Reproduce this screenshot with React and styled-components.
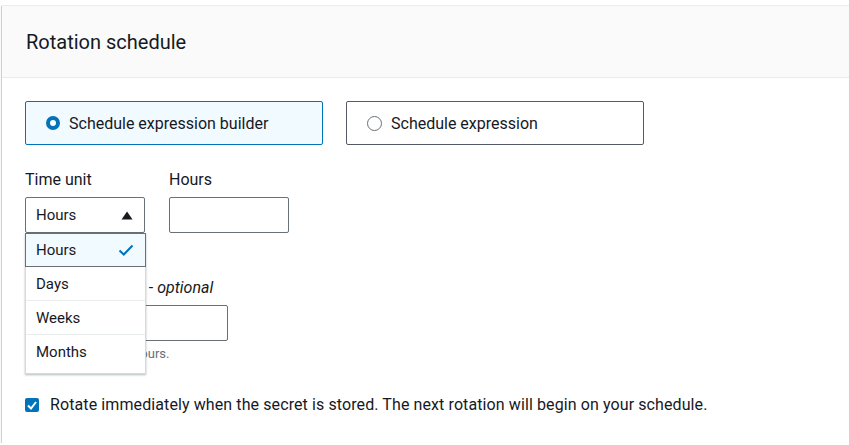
import React from "react";
import styled, { createGlobalStyle } from "styled-components";

const GlobalStyle = createGlobalStyle`
  html, body {
    margin: 0;
    padding: 0;
    background: #ffffff;
    overflow: hidden;
  }
  body {
    font-family: Roboto, "Liberation Sans", sans-serif;
    color: #16191f;
    padding: 5px 0 0 2px;
  }
`;

const Card = styled.section`
  width: 880px;
  background: #ffffff;
  box-shadow: 0 1px 1px 0 rgba(0, 28, 36, 0.3), 1px 1px 1px 0 rgba(0, 28, 36, 0.15),
    -1px 1px 1px 0 rgba(0, 28, 36, 0.15);
  border-top: 1px solid #eaeded;
`;

const Header = styled.header`
  height: 71px;
  display: flex;
  align-items: center;
  padding: 0 24px;
  background: #fafafa;
  border-bottom: 1px solid #eaeded;
`;

const Title = styled.h2`
  margin: 0;
  font-size: 20px;
  font-weight: 400;
  line-height: 24px;
  padding-top: 1px;
`;

const Body = styled.div`
  padding: 23px 23px 28px;
  display: flex;
  flex-direction: column;
`;

const Tiles = styled.div`
  display: flex;
  gap: 23px;
`;

const Tile = styled.label`
  width: 298px;
  height: 44px;
  box-sizing: border-box;
  display: flex;
  align-items: center;
  gap: 9px;
  padding: 0 20px;
  border: 1px solid ${(p) => (p.$checked ? "#0073bb" : "#545b64")};
  background: ${(p) => (p.$checked ? "#f1faff" : "#ffffff")};
  border-radius: 2px;
  font-size: 16px;
`;

const Radio = styled.span`
  width: ${(p) => (p.$checked ? 14 : 15)}px;
  height: ${(p) => (p.$checked ? 14 : 15)}px;
  box-sizing: border-box;
  border-radius: 50%;
  border: ${(p) => (p.$checked ? "4px solid #0073bb" : "1.5px solid #687078")};
  background: #ffffff;
  flex: none;
`;

const FieldRow = styled.div`
  display: flex;
  gap: 24px;
  margin-top: 25px;
`;

const Field = styled.div`
  display: flex;
  flex-direction: column;
  position: relative;
`;

const Label = styled.div`
  font-size: 16px;
  line-height: 20px;
  margin-bottom: 7px;

  em {
    font-style: italic;
  }
`;

const Box = styled.div`
  width: ${(p) => p.$w}px;
  height: 36px;
  box-sizing: border-box;
  border: 1px solid #687078;
  border-radius: 2px;
  background: #ffffff;
  display: flex;
  align-items: center;
  justify-content: space-between;
  padding: 0 11px 0 10px;
  font-size: 15px;
`;

const Menu = styled.ul`
  position: absolute;
  top: 63px;
  left: 0;
  width: 121px;
  margin: 0;
  padding: 0;
  list-style: none;
  background: #ffffff;
  border: 1px solid #d5dbdb;
  border-top: none;
  box-sizing: border-box;
  box-shadow: 0 1px 2px rgba(0, 28, 36, 0.3);
  z-index: 2;
`;

const Item = styled.li`
  height: ${(p) => (p.$last ? 38 : 34)}px;
  box-sizing: border-box;
  display: flex;
  align-items: center;
  justify-content: space-between;
  padding: 0 11px 0 10px;
  font-size: 15px;
  background: ${(p) => (p.$selected ? "#f1faff" : "#ffffff")};
  border: ${(p) => (p.$selected ? "1px solid #687078" : "none")};
  margin: ${(p) => (p.$selected ? "0 -1px" : "0")};
  border-bottom: 1px solid ${(p) => (p.$selected ? "#687078" : p.$last ? "transparent" : "#eaeded")};
  padding-bottom: ${(p) => (p.$last ? 4 : 0)}px;
`;

const Hint = styled.div`
  font-size: 13px;
  line-height: 16px;
  color: #687078;
  margin-top: 5px;
`;

const Duration = styled(Field)`
  margin-top: 45px;
`;

const CheckRow = styled.label`
  display: flex;
  align-items: center;
  gap: 11px;
  margin-top: 33px;
  font-size: 16px;
  letter-spacing: 0.1px;
  line-height: 20px;
`;

const Check = styled.span`
  width: 14px;
  height: 14px;
  border-radius: 2px;
  background: #0073bb;
  display: flex;
  align-items: center;
  justify-content: center;
  flex: none;
`;

const options = ["Hours", "Days", "Weeks", "Months"];

export default function App() {
  return (
    <>
      <GlobalStyle />
      <Card>
        <Header>
          <Title>Rotation schedule</Title>
        </Header>
        <Body>
          <Tiles>
            <Tile $checked>
              <Radio $checked />
              Schedule expression builder
            </Tile>
            <Tile>
              <Radio />
              Schedule expression
            </Tile>
          </Tiles>

          <FieldRow>
            <Field>
              <Label>Time unit</Label>
              <Box $w={120}>
                Hours
                <svg width="12" height="9" viewBox="0 0 12 9">
                  <path d="M6 0.5 L11.5 8.5 L0.5 8.5 Z" fill="#16191f" />
                </svg>
              </Box>
              <Menu>
                {options.map((o, i) => (
                  <Item key={o} $selected={i === 0} $last={i === options.length - 1}>
                    {o}
                    {i === 0 && (
                      <svg width="16" height="12" viewBox="0 0 16 12">
                        <path
                          d="M1.5 6.5 L5.8 10.5 L14.5 1.5"
                          fill="none"
                          stroke="#0073bb"
                          strokeWidth="2"
                        />
                      </svg>
                    )}
                  </Item>
                ))}
              </Menu>
            </Field>
            <Field>
              <Label>Hours</Label>
              <Box $w={120} />
            </Field>
          </FieldRow>

          <Duration>
            <Label>
              Window duration - <em>optional</em>
            </Label>
            <Box $w={203} />
            <Hint>Enter a duration in hours.</Hint>
          </Duration>

          <CheckRow>
            <Check>
              <svg width="10" height="9" viewBox="0 0 10 9">
                <path d="M1 4.5 L4 7.5 L9 1" fill="none" stroke="#ffffff" strokeWidth="2" />
              </svg>
            </Check>
            Rotate immediately when the secret is stored. The next rotation will begin on your
            schedule.
          </CheckRow>
        </Body>
      </Card>
    </>
  );
}
